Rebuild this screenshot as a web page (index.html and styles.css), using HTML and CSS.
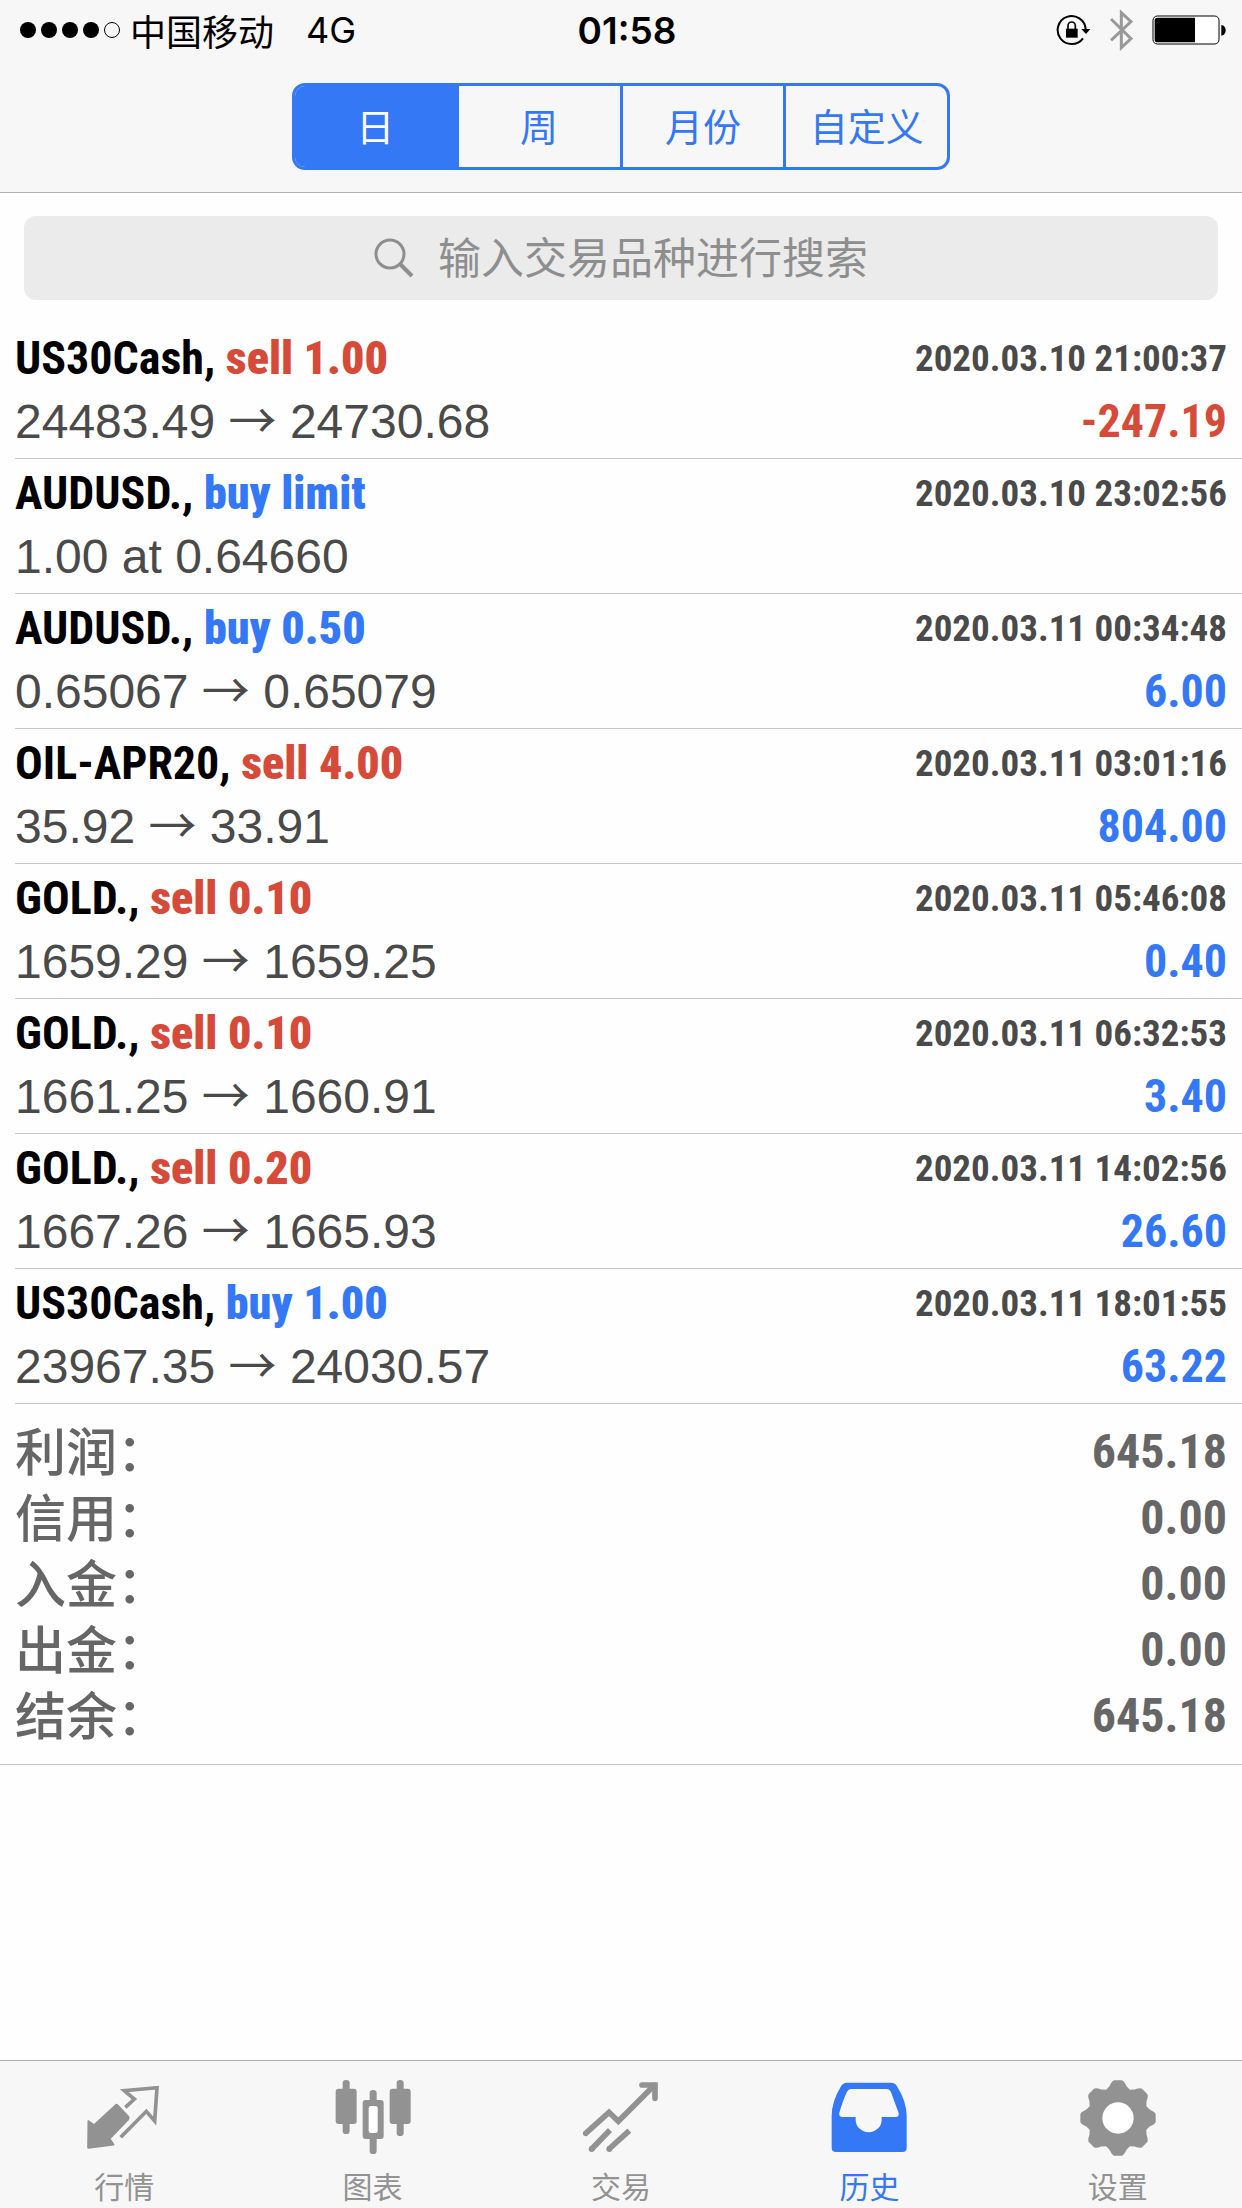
FILE: index.html
```html
<!DOCTYPE html>
<html lang="zh-CN">

<head>
    <meta charset="UTF-8">
    <meta name="viewport" content="width=device-width, initial-scale=1.0">
    <title>历史</title>
    <link rel="stylesheet" href="styles.css">
</head>

<body>
    <header class="header">
        <!-- 状态栏 -->
        <div class="status">
            <div class="status-left">
                <svg class="signal" viewBox="0 0 100 16" aria-hidden="true">
                    <circle cx="8" cy="8" r="8" />
                    <circle cx="29" cy="8" r="8" />
                    <circle cx="50" cy="8" r="8" />
                    <circle cx="71" cy="8" r="8" />
                    <circle cx="92" cy="8" r="7.5" fill="none" stroke="#000" />
                </svg>
                <span class="carrier">中国移动</span>
                <span>4G</span>
            </div>
            <div class="time">01:58</div>
            <div class="status-right">
                <svg class="lock" viewBox="112 42 105 96" aria-hidden="true">
                    <path d="M193 115A42 42 0 1 1 201 88" fill="none" stroke="#000" stroke-width="6" />
                    <path d="M188 87h27l-13 15z" />
                    <path d="M142 86h35v27h-35z" />
                    <path d="M148 88v-11a11 11 0 0 1 22 0v11" fill="none" stroke="#000" stroke-width="5" />
                </svg>
                <svg class="bluetooth" viewBox="270 28 69 126" aria-hidden="true">
                    <path d="M273 58L333 117L304 144V39L333 66L273 122" fill="none" stroke="#999" stroke-width="9" />
                </svg>
                <svg class="battery" viewBox="395 46 222 90" aria-hidden="true">
                    <rect x="398" y="49" width="198" height="84" rx="13" fill="#fff" stroke="#000" stroke-width="3" />
                    <path d="M524 54v74H411q-8 0-8-8V62q0-8 8-8z" />
                    <path d="M603 76q13 2 13 16t-13 16z" />
                </svg>
            </div>
        </div>
        <!-- 时间段切换 -->
        <div class="segment">
            <button type="button" class="active">日</button>
            <button type="button">周</button>
            <button type="button">月份</button>
            <button type="button">自定义</button>
        </div>
    </header>

    <main class="main">
        <label class="search">
            <svg class="search-icon" viewBox="0 0 40 40" aria-hidden="true">
                <circle cx="16" cy="16" r="14" />
                <path d="M26 26L38 38" stroke-width="4" />
            </svg>
            <input type="text" placeholder="输入交易品种进行搜索" aria-label="搜索">
        </label>

        <!-- 历史订单 -->
        <ul class="orders">
            <li>
                <span class="symbol">US30Cash, <b class="red">sell 1.00</b></span>
                <span class="date">2020.03.10 21:00:37</span>
                <span class="price">24483.49 <i class="arrow">→</i> 24730.68</span>
                <span class="profit red">-247.19</span>
            </li>
            <li>
                <span class="symbol">AUDUSD., <b class="blue">buy limit</b></span>
                <span class="date">2020.03.10 23:02:56</span>
                <span class="price">1.00 at 0.64660</span>
            </li>
            <li>
                <span class="symbol">AUDUSD., <b class="blue">buy 0.50</b></span>
                <span class="date">2020.03.11 00:34:48</span>
                <span class="price">0.65067 <i class="arrow">→</i> 0.65079</span>
                <span class="profit blue">6.00</span>
            </li>
            <li>
                <span class="symbol">OIL-APR20, <b class="red">sell 4.00</b></span>
                <span class="date">2020.03.11 03:01:16</span>
                <span class="price">35.92 <i class="arrow">→</i> 33.91</span>
                <span class="profit blue">804.00</span>
            </li>
            <li>
                <span class="symbol">GOLD., <b class="red">sell 0.10</b></span>
                <span class="date">2020.03.11 05:46:08</span>
                <span class="price">1659.29 <i class="arrow">→</i> 1659.25</span>
                <span class="profit blue">0.40</span>
            </li>
            <li>
                <span class="symbol">GOLD., <b class="red">sell 0.10</b></span>
                <span class="date">2020.03.11 06:32:53</span>
                <span class="price">1661.25 <i class="arrow">→</i> 1660.91</span>
                <span class="profit blue">3.40</span>
            </li>
            <li>
                <span class="symbol">GOLD., <b class="red">sell 0.20</b></span>
                <span class="date">2020.03.11 14:02:56</span>
                <span class="price">1667.26 <i class="arrow">→</i> 1665.93</span>
                <span class="profit blue">26.60</span>
            </li>
            <li>
                <span class="symbol">US30Cash, <b class="blue">buy 1.00</b></span>
                <span class="date">2020.03.11 18:01:55</span>
                <span class="price">23967.35 <i class="arrow">→</i> 24030.57</span>
                <span class="profit blue">63.22</span>
            </li>
        </ul>

        <!-- 汇总 -->
        <dl class="summary">
            <div><dt>利润：</dt><dd>645.18</dd></div>
            <div><dt>信用：</dt><dd>0.00</dd></div>
            <div><dt>入金：</dt><dd>0.00</dd></div>
            <div><dt>出金：</dt><dd>0.00</dd></div>
            <div><dt>结余：</dt><dd>645.18</dd></div>
        </dl>
    </main>

    <!-- 底部导航 -->
    <nav class="tabs">
        <a href="#quotes">
            <svg viewBox="258 90 228 228" aria-hidden="true">
                <path d="M265 213L282 225L347 165Q350 163 353 166L385 200Q388 204 385 208L329 266L341 284L266 294Q264 294 264 292Z" stroke="currentColor" stroke-width="5" stroke-linejoin="round" />
                <path d="M376 172L403 147L373 122L471 113L464 213L439 184L362 262" fill="none" stroke="currentColor" stroke-width="11" />
            </svg>
            行情
        </a>
        <a href="#chart">
            <svg viewBox="1003 90 228 228" aria-hidden="true">
                <rect x="1005" y="116" width="63" height="106" rx="9" />
                <rect x="1026" y="90" width="21" height="162" rx="10" />
                <rect x="1167" y="116" width="63" height="106" rx="9" />
                <rect x="1188" y="90" width="21" height="168" rx="10" />
                <rect x="1107" y="120" width="21" height="192" rx="10" />
                <rect x="1086" y="150" width="63" height="117" rx="9" />
                <rect x="1104" y="168" width="27" height="81" rx="7" fill="#fff" />
            </svg>
            图表
        </a>
        <a href="#trade">
            <svg viewBox="126 90 228 228" aria-hidden="true">
                <g fill="none" stroke="currentColor" stroke-width="17">
                    <path d="M134 250L204 187L232 214L340 106" stroke-linecap="round" />
                    <path d="M303 105H342V145" stroke-linecap="round" />
                    <path d="M152 297L207 240M204 297L265 242" />
                </g>
                <circle cx="152" cy="297" r="9" />
                <circle cx="205" cy="297" r="9" />
            </svg>
            交易
        </a>
        <a href="#history" class="active">
            <svg viewBox="868 90 228 228" aria-hidden="true">
                <path fill-rule="evenodd" d="M915 98H1048Q1060 98 1066 109Q1095 155 1095 198V293Q1095 306 1082 306H883Q870 306 870 293V198Q870 155 898 109Q904 98 915 98ZM928 117Q920 117 916 125Q904 150 893 188Q891 201 903 201H942V209A39 38 0 0 0 1020 209V201H1062Q1073 201 1071 190L1049 129Q1045 117 1034 117Z" />
            </svg>
            历史
        </a>
        <a href="#settings">
            <svg viewBox="-114 -114 228 228" aria-hidden="true">
                <defs>
                    <path id="tooth" d="M-36 -84L-25 -96Q-18 -112 -11 -113H11Q18 -112 25 -96L36 -84V-40H-36Z" />
                </defs>
                <circle r="91" />
                <use href="#tooth" />
                <use href="#tooth" transform="rotate(45)" />
                <use href="#tooth" transform="rotate(90)" />
                <use href="#tooth" transform="rotate(135)" />
                <use href="#tooth" transform="rotate(180)" />
                <use href="#tooth" transform="rotate(225)" />
                <use href="#tooth" transform="rotate(270)" />
                <use href="#tooth" transform="rotate(315)" />
                <circle r="47" fill="#fff" />
            </svg>
            设置
        </a>
    </nav>
</body>

</html>
```

FILE: styles.css
```css
* {
    margin: 0;
    padding: 0;
    box-sizing: border-box;
}

body {
    display: flex;
    flex-direction: column;
    min-height: 100vh;
    background-color: #fefefe;
    font-family: "Liberation Sans", "Noto Sans CJK SC", sans-serif;
}

.header {
    background-color: #f7f7f7;
    border-bottom: 1px solid #b2b2b2;
    padding-bottom: 22px;
}

/* 状态栏 */
.status {
    display: grid;
    grid-template-columns: 1fr auto 1fr;
    align-items: center;
    height: 60px;
    padding: 0 16px 0 20px;
    font-family: Inter, "Noto Sans CJK SC", sans-serif;
    font-size: 36px;
}

.status-left,
.status-right {
    display: flex;
    align-items: center;
}

.status-right {
    justify-content: flex-end;
    gap: 19px;
}

.signal {
    width: 100px;
    height: 16px;
}

.carrier {
    margin: 0 32px 0 10px;
}

.time {
    padding-left: 8px;
    font-size: 37px;
    font-weight: 600;
}

.lock {
    width: 35px;
    height: 32px;
}

.bluetooth {
    width: 23px;
    height: 42px;
}

.battery {
    width: 74px;
    height: 30px;
}

/* 时间段切换 */
.segment {
    display: flex;
    width: 53%;
    height: 87px;
    margin: 23px auto 0;
    border: 3px solid #3478f6;
    border-radius: 13px;
    overflow: hidden;
}

.segment button {
    flex: 1;
    padding-bottom: 5px;
    border: none;
    border-left: 3px solid #3478f6;
    background-color: transparent;
    color: #3478f6;
    font-family: "Noto Sans CJK SC", sans-serif;
    font-size: 38px;
}

.segment button:first-child {
    border-left: none;
}

.segment .active {
    background-color: #3478f6;
    color: #fff;
}

.main {
    flex: 1;
}

/* 搜索框 */
.search {
    display: flex;
    justify-content: center;
    align-items: center;
    gap: 24px;
    height: 84px;
    margin: 23px 24px 24px;
    border-radius: 12px;
    background-color: #ebebeb;
}

.search-icon {
    width: 40px;
    height: 40px;
    fill: none;
    stroke: #8e8e8e;
    stroke-width: 3px;
}

.search input {
    width: 10em;
    height: 84px;
    padding-bottom: 6px;
    border: none;
    outline: none;
    background-color: transparent;
    font-family: "Noto Sans CJK SC", sans-serif;
    font-size: 43px;
}

.search input::placeholder {
    color: #8e8e8e;
    opacity: 1;
}

/* 历史订单 */
.orders {
    list-style: none;
}

.orders li {
    display: grid;
    grid-template-columns: 1fr auto;
    grid-template-rows: 63px 63px;
    height: 135px;
    margin-left: 15px;
    padding: 3px 15px 0 0;
    border-bottom: 1px solid #c8c8c8;
    line-height: 63px;
}

.symbol,
.date,
.profit,
.summary dd {
    font-family: "Roboto Condensed", "Liberation Sans Narrow", sans-serif;
    font-weight: bold;
}

.symbol {
    font-size: 46px;
}

.date {
    color: #4a4a4a;
    font-size: 37px;
}

.price {
    color: #4a4a4a;
    font-size: 48px;
}

.arrow {
    font-family: "Noto Sans CJK SC", sans-serif;
    font-style: normal;
    line-height: 1;
}

.profit {
    font-size: 46px;
    text-align: right;
}

.red {
    color: #d54a38;
}

.blue {
    color: #3478f6;
}

/* 汇总 */
.summary {
    padding: 15px;
    border-bottom: 1px solid #c8c8c8;
    color: #666;
    line-height: 66px;
}

.summary div {
    display: flex;
    justify-content: space-between;
    height: 66px;
}

.summary dt {
    font-family: "Noto Sans CJK SC", sans-serif;
    font-size: 51px;
    font-weight: 500;
    line-height: 60px;
}

.summary dd {
    font-size: 48px;
}

/* 底部导航 */
.tabs {
    display: flex;
    height: 148px;
    border-top: 1px solid #b2b2b2;
    background-color: #f7f7f7;
}

.tabs a {
    flex: 1;
    display: flex;
    flex-direction: column;
    align-items: center;
    gap: 9px;
    padding-top: 19px;
    color: #929292;
    font-family: "Noto Sans CJK SC", sans-serif;
    font-size: 30px;
    line-height: 40px;
    text-decoration: none;
}

.tabs svg {
    width: 76px;
    height: 76px;
    fill: currentColor;
}

.tabs .active {
    color: #3478f6;
}
```
